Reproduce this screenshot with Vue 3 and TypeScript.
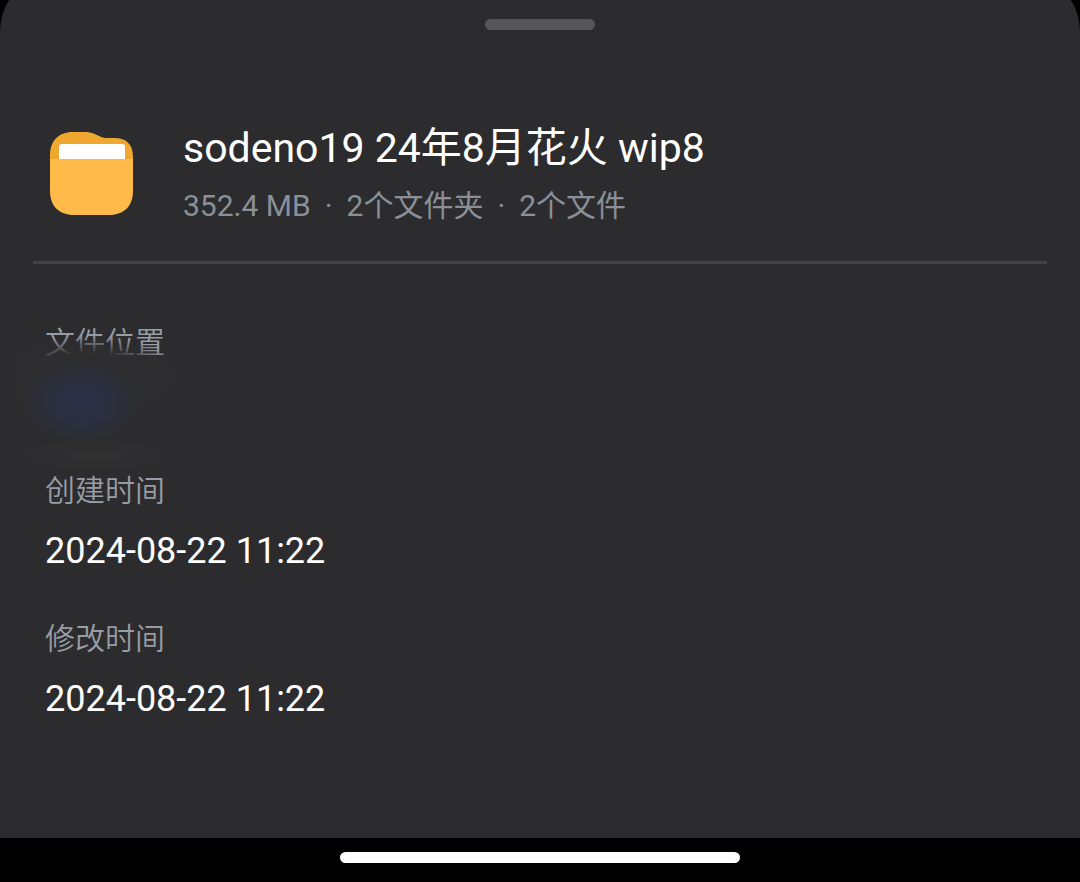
<script setup lang="ts">
interface Detail {
  label: string
  value: string
  hidden?: boolean
}

const folder = {
  name: 'sodeno19 24年8月花火 wip8',
  summary: ['352.4 MB', '2个文件夹', '2个文件'],
}

const details: Detail[] = [
  { label: '文件位置', value: '', hidden: true },
  { label: '创建时间', value: '2024-08-22 11:22' },
  { label: '修改时间', value: '2024-08-22 11:22' },
]
</script>

<template>
  <div class="screen">
    <main class="sheet">
      <div class="handle"></div>
      <header class="header">
        <svg class="folder" viewBox="0 0 83 83" aria-hidden="true">
          <path
            d="M0 40V24C0 9 8 0 23 0H34C41 0 45 2 49 4C52 5.500 54 6 58 6H65C76 6 83 12 83 25V40Z"
            fill="#efa730"
          />
          <path d="M9 28V15Q9 12 12 12H72Q75 12 75 15V28Z" fill="#fff" />
          <path d="M0 27H83V59C83 74 74 83 59 83H24C9 83 0 74 0 59Z" fill="#ffba4a" />
        </svg>
        <div class="heading">
          <h1 class="name">{{ folder.name }}</h1>
          <p class="summary">
            <template v-for="(part, index) in folder.summary" :key="part">
              <span v-if="index > 0">·</span>
              <span>{{ part }}</span>
            </template>
          </p>
        </div>
      </header>
      <dl class="details">
        <div v-for="item in details" :key="item.label" class="detail">
          <dt class="label">{{ item.label }}</dt>
          <dd class="value">
            {{ item.value }}
            <span v-if="item.hidden" class="smudge"></span>
          </dd>
        </div>
      </dl>
    </main>
    <footer class="nav">
      <div class="home"></div>
    </footer>
  </div>
</template>

<style>
body {
  margin: 0;
  background: #000;
}
</style>

<style scoped>
.screen {
  display: flex;
  flex-direction: column;
  min-height: 100vh;
  background: #000;
  color: #fff;
  font-family: Roboto, 'Noto Sans CJK SC', sans-serif;
}

.sheet {
  flex: 1;
  display: flex;
  flex-direction: column;
  padding: 0 33px;
  border-radius: 36px 36px 0 0 / 48px 48px 0 0;
  margin-top: -16px;
  padding-top: 35px;
  background: #2c2c2e;
}

.handle {
  align-self: center;
  width: 110px;
  height: 11px;
  border-radius: 6px;
  background: #56555a;
}

.header {
  display: flex;
  align-items: center;
  gap: 50px;
  margin-top: 85px;
  padding: 0 17px 30px;
  border-bottom: 3px solid #434345;
}

.folder {
  flex: none;
  width: 83px;
  height: 83px;
}

.name {
  margin: 0;
  font-size: 41px;
  font-weight: 400;
  line-height: 66px;
}

.summary {
  display: flex;
  flex-wrap: wrap;
  gap: 0 14px;
  margin: 0;
  font-family: Roboto, 'Noto Sans CJK SC', sans-serif;
  font-size: 30px;
  font-weight: 400;
  line-height: 50px;
  color: #8b8f98;
}

.details {
  display: flex;
  flex-direction: column;
  gap: 40px;
  margin: 55px 0 0;
  padding: 0 12px;
}

.detail {
  position: relative;
}

.label {
  font-size: 30px;
  font-weight: 350;
  line-height: 48px;
  color: #989ca5;
}

.value {
  min-height: 48px;
  margin: 0;
  padding-top: 12px;
  font-size: 36px;
  line-height: 48px;
}

.smudge {
  position: absolute;
  top: 14px;
  left: -30px;
  width: 170px;
  height: 140px;
  background:
    radial-gradient(ellipse 60px 42px at 66px 69px, #2b3249 0%, #2b2f3f 50%, transparent 100%),
    radial-gradient(ellipse 96px 40px at 72px 42px, #2e2e30 0%, #2e2e30 54%, transparent 100%),
    radial-gradient(ellipse 76px 16px at 80px 122px, #313132 0%, transparent 100%);
}

.nav {
  display: flex;
  justify-content: center;
  align-items: center;
  height: 44px;
}

.home {
  width: 37%;
  height: 11px;
  margin-bottom: 6px;
  border-radius: 6px;
  background: #fff;
}
</style>
